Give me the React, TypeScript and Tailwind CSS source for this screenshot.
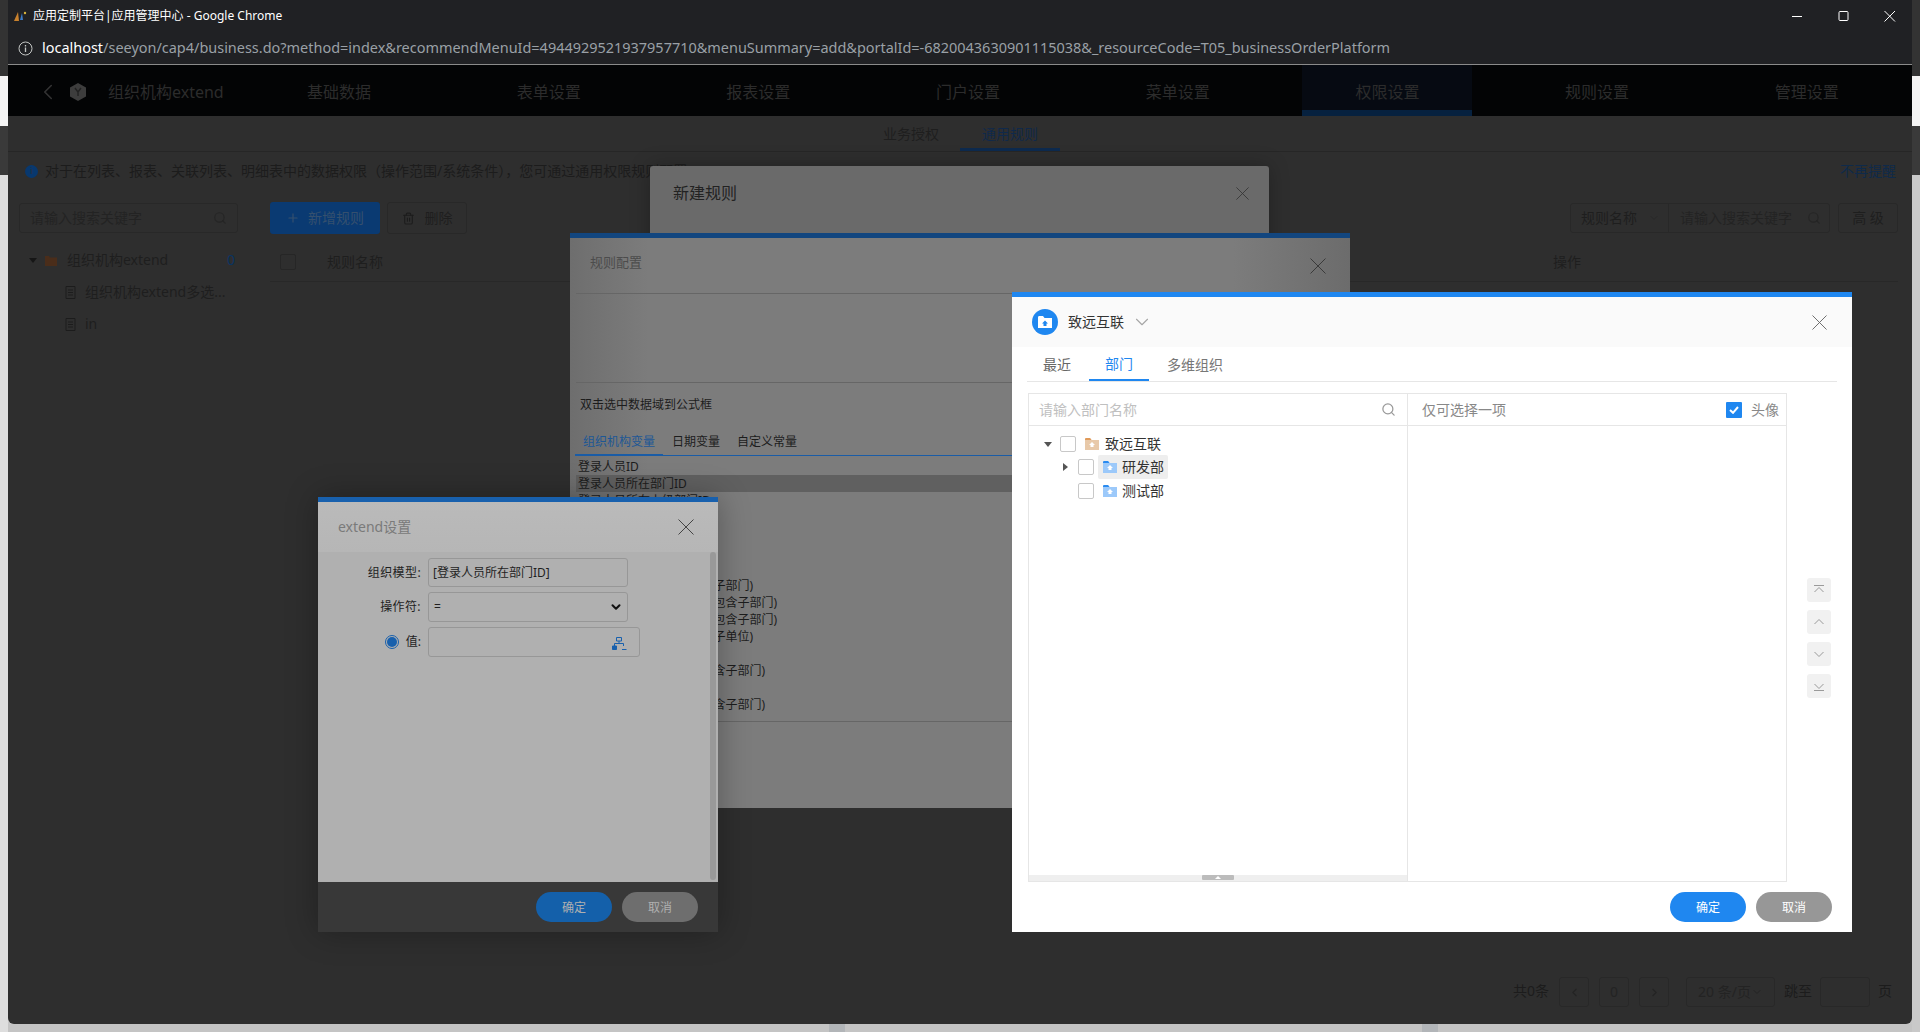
import React from "react";
import { ChevronDown, ChevronLeft, ChevronRight, Plus, Search, Trash2 } from "lucide-react";

const font = "font-['Noto_Sans','Noto_Sans_CJK_SC',sans-serif]";

function Thin({ size = 16, color = "#555" }: { size?: number; color?: string }) {
  return (
    <svg width={size} height={size} viewBox="0 0 16 16">
      <path d="M0.5 0.5L15.5 15.5M15.5 0.5L0.5 15.5" stroke={color} strokeWidth="1" fill="none" />
    </svg>
  );
}

function DocIcon() {
  return (
    <svg width="11" height="13" viewBox="0 0 11 13" fill="none" stroke="#1c1c1c" strokeWidth="1">
      <path d="M1 .5h9v12H1z" />
      <path d="M3 4h5M3 6.500h5M3 9h5" />
    </svg>
  );
}

function FolderIcon({ color, tab, glyph }: { color: string; tab: string; glyph: string }) {
  return (
    <svg width="14" height="12" viewBox="0 0 14 12">
      <path d="M0 1.500C0 .7.500 0 1.300 0H5l1.500 2H14v10H0z" fill={color} />
      <path d="M0 1.500C0 .7.500 0 1.300 0H5l1.500 2H0z" fill={tab} />
      <path d="M7 4l3 3H8.500v2h-3V7H4z" fill={glyph} />
    </svg>
  );
}

function NavItem({ label, active }: { label: string; active?: boolean }) {
  return (
    <div
      className={
        active
          ? "flex h-[51px] items-center justify-center border-b-[6px] border-[#06213f] bg-[#060a12] pt-[8px] text-base text-[#2c2c2c]"
          : "flex h-[51px] items-center justify-center pt-[2px] text-base text-[#2c2c2c]"
      }
    >
      {label}
    </div>
  );
}

const rows = [
  "登录人员ID",
  "登录人员所在部门ID",
  "登录人员所在上级部门ID",
  "登录人员所在单位ID",
  "登录人员所在岗位ID",
  "登录人员职务级别ID",
  "当前日期",
  "登录人员所在部门(不包含子部门)",
  "登录人员所在上级部门(不包含子部门)",
  "登录人员所在单位部门(不包含子部门)",
  "登录人员所在单位(不包含子单位)",
  "登录人员岗位",
  "登录人员所在岗位部门(包含子部门)",
  "登录人员职务",
  "登录人员所在职务部门(包含子部门)",
];

function PageBox({ children, w }: { children?: React.ReactNode; w: string }) {
  return (
    <div className={`flex h-[30px] items-center justify-center rounded-[3px] border border-[#282828] text-[#232323] ${w}`}>
      {children}
    </div>
  );
}

function SideBtn({ d }: { d: string }) {
  return (
    <div className="flex h-6 w-6 items-center justify-center rounded-[3px] bg-[#f1f1f1]">
      <svg width="12" height="12" viewBox="0 0 12 12" fill="none" stroke="#9a9a9a" strokeWidth="1">
        <path d={d} />
      </svg>
    </div>
  );
}

function Box({ className }: { className?: string }) {
  return <span className={`block h-4 w-4 rounded-[2px] border border-[#c8c8c8] bg-white ${className ?? ""}`} />;
}

export default function App() {
  return (
    <div className={`relative flex h-[1032px] w-[1920px] overflow-hidden bg-[#c6c6c6] ${font}`}>
      {/* desktop behind the browser window, left edge */}
      <div className="flex w-2 flex-col">
        <div className="h-[76px] bg-[#333333]" />
        <div className="h-[50px] bg-[#f4f4f4]" />
        <div className="h-[49px] bg-[#3a3a3a]" />
        <div className="flex-1 bg-[#dedede]" />
      </div>

      <div className="flex w-[1904px] flex-col">
        <div className="flex h-[1024px] flex-col overflow-hidden rounded-b-[6px] bg-[#2e2e2e]">
          {/* title bar */}
          <div className="flex h-[32px] shrink-0 items-center bg-[#202124] pl-[5px] text-white">
            <svg width="14" height="12" viewBox="0 0 14 12" className="mr-[6px]">
              <path d="M1 11L5 2l1 9z" fill="#c9812d" />
              <path d="M7 10l2-7 1 7z" fill="#3a7bc8" />
              <circle cx="12" cy="3" r="1.2" fill="#d9b53c" />
            </svg>
            <span className="text-xs">应用定制平台|应用管理中心 - Google Chrome</span>
            <div className="ml-auto flex items-center">
              <svg width="46" height="14" viewBox="0 0 46 14" stroke="#fff" fill="none"><path d="M18 7.500h10" /></svg>
              <svg width="46" height="14" viewBox="0 0 46 14" stroke="#fff" fill="none"><rect x="19" y="2.500" width="9" height="9" rx="1" /></svg>
              <svg width="46" height="14" viewBox="0 0 46 14" stroke="#fff" fill="none"><path d="M18.500 2L29 12.500M29 2L18.500 12.500" /></svg>
            </div>
          </div>
          {/* address bar */}
          <div className="flex h-[33px] shrink-0 items-center border-b border-[#8b8b8b] bg-[#202124] pl-[10px] text-[#9aa0a6]">
            <svg width="15" height="15" viewBox="0 0 15 15" fill="none" stroke="#c4c7c5" className="mr-[9px]">
              <circle cx="7.500" cy="7.500" r="6.500" />
              <path d="M7.500 6.500v4.500M7.500 4v1.400" strokeWidth="1.3" />
            </svg>
            <span className="whitespace-nowrap text-[14.46px]">
              <span className="text-white">localhost</span>
              /seeyon/cap4/business.do?method=index&amp;recommendMenuId=4944929521937957710&amp;menuSummary=add&amp;portalId=-6820043630901115038&amp;_resourceCode=T05_businessOrderPlatform
            </span>
          </div>
          {/* app nav */}
          <div className="flex h-[51px] shrink-0 bg-[#030405]">
            <div className="flex w-[246px] items-center pl-[27px] pt-[2px] text-[#2c2c2c]">
              <ChevronLeft size={26} strokeWidth={1.5} color="#333" />
              <svg width="18" height="20" viewBox="0 0 18 20" className="ml-[8px] mr-[21px] shrink-0">
                <path d="M9 1l8 4.500v9L9 19l-8-4.500v-9z" fill="#3d3d3d" />
                <path d="M6 6l3 4 3-4M9 10v4" stroke="#222" strokeWidth="1.4" fill="none" />
              </svg>
              <span className="whitespace-nowrap text-base">组织机构extend</span>
            </div>
            <div className="grid grid-cols-[repeat(8,170px)] gap-x-[39.7px]">
              {["基础数据", "表单设置", "报表设置", "门户设置", "菜单设置", "权限设置", "规则设置", "管理设置"].map((n) => (
                <NavItem key={n} label={n} active={n === "权限设置"} />
              ))}
            </div>
          </div>
          {/* sub tabs */}
          <div className="flex h-[36px] shrink-0 justify-center border-b border-[#262626] bg-[#2e2e2e] pl-[1px] text-sm">
            <div className="flex w-[100px] items-center justify-center pt-[1px] text-[#1e1e1e]">业务授权</div>
            <div className="ml-[-1px] flex w-[100px] items-center justify-center border-b-[3px] border-[#0d2a4e] pt-[4px] text-[#10294a]">通用规则</div>
          </div>
          {/* notice */}
          <div className="flex h-[38px] shrink-0 items-center bg-[#2e2e2e] pl-[17px] pr-[16px] text-sm text-[#1c1c1c]">
            <span className="mr-[7px] flex h-[13px] w-[13px] items-center justify-center rounded-full bg-[#08386e] text-[9px] text-[#2e2e2e]">i</span>
            <span className="whitespace-nowrap">对于在列表、报表、关联列表、明细表中的数据权限（操作范围/系统条件），您可通过通用权限规则配置</span>
            <span className="ml-auto text-[#0f2a4a]">不再提醒</span>
          </div>
          {/* content */}
          <div className="flex min-h-0 flex-1 text-sm text-[#1e1e1e]">
            <div className="w-[247px] shrink-0 pl-[11px] pt-[13px]">
              <div className="flex h-[30px] w-[219px] items-center justify-between rounded-[3px] border border-[#282828] px-[10px] text-[#232323]">
                <span>请输入搜索关键字</span>
                <Search size={14} color="#252525" />
              </div>
              <div className="mt-[11px] flex h-[32px] items-center pl-[10px] pr-[20px]">
                <span className="mr-[8px] h-0 w-0 border-x-[4px] border-t-[5px] border-x-transparent border-t-[#161616]" />
                <svg width="12" height="11" viewBox="0 0 12 11"><path d="M0 1h4l1 1.500h7V11H0z" fill="#4a2d1a" /></svg>
                <span className="ml-[10px]">组织机构extend</span>
                <span className="ml-auto text-[#0a3462]">0</span>
              </div>
              <div className="flex h-[32px] items-center pl-[46px]">
                <DocIcon />
                <span className="ml-[9px] whitespace-nowrap">组织机构extend多选...</span>
              </div>
              <div className="flex h-[32px] items-center pl-[46px]">
                <DocIcon />
                <span className="ml-[9px]">in</span>
              </div>
            </div>
            <div className="flex min-w-0 flex-1 flex-col pl-[15px] pr-[14px]">
              <div className="mt-[12px] flex h-[32px] shrink-0 items-center">
                <div className="flex h-[32px] w-[110px] items-center justify-center gap-[8px] rounded-[3px] bg-[#0a3a72] text-[#35506e]">
                  <Plus size={14} color="#35506e" />
                  <span>新增规则</span>
                </div>
                <div className="ml-[7px] flex h-[32px] w-[80px] items-center justify-center gap-[10px] rounded-[3px] border border-[#282828]">
                  <Trash2 size={13} color="#1c1c1c" />
                  <span>删除</span>
                </div>
                <div className="ml-auto flex h-[30px] w-[260px] rounded-[3px] border border-[#282828] text-[#232323]">
                  <div className="flex w-[98px] items-center justify-between border-r border-[#282828] pl-[10px] pr-[8px] text-[#1e1e1e]">
                    规则名称 <ChevronDown size={12} color="#282828" />
                  </div>
                  <div className="flex flex-1 items-center justify-between pl-[11px] pr-[8px] whitespace-nowrap">
                    请输入搜索关键字 <Search size={14} color="#252525" />
                  </div>
                </div>
                <div className="ml-[8px] flex h-[30px] w-[60px] items-center justify-center rounded-[3px] border border-[#282828]">高 级</div>
              </div>
              <div className="mt-[11px] flex h-[37px] shrink-0 items-center border-b border-[#282828] pb-[2px] pl-[10px]">
                <span className="h-4 w-4 rounded-[2px] border border-[#262626]" />
                <span className="ml-[31px]">规则名称</span>
                <span className="ml-[1170px]">操作</span>
              </div>
              <div className="flex flex-1 items-end justify-end pb-[17px] pr-[6px]">
                <div className="flex items-center text-[#1c1c1c]">
                  <span className="mr-[10px] pb-[2px]">共0条</span>
                  <PageBox w="w-[30px]"><ChevronLeft size={13} /></PageBox>
                  <span className="w-[10px]" />
                  <PageBox w="w-[30px]">0</PageBox>
                  <span className="w-[10px]" />
                  <PageBox w="w-[30px]"><ChevronRight size={13} /></PageBox>
                  <span className="w-[17px]" />
                  <PageBox w="w-[89px]">20 条/页<ChevronDown size={12} /></PageBox>
                  <span className="ml-[9px] pb-[2px]">跳至</span>
                  <span className="w-[8px]" />
                  <PageBox w="w-[50px]" />
                  <span className="ml-[8px] pb-[2px]">页</span>
                </div>
              </div>
            </div>
          </div>
        </div>
        {/* desktop below the browser window */}
        <div className="relative flex-1 bg-[#c4c4c4]">
          <span className="absolute left-[821px] top-0 h-2 w-4 bg-[#b2b5b8]" />
          <span className="absolute left-[1414px] top-0 h-2 w-4 bg-[#b2b5b8]" />
        </div>
      </div>

      {/* desktop behind the browser window, right edge */}
      <div className="flex w-2 flex-col">
        <div className="h-[76px] bg-[#333333]" />
        <div className="h-[50px] bg-[#f4f4f4]" />
        <div className="h-[49px] bg-[#3a3a3a]" />
        <div className="flex-1 bg-[#c9c9c9]" />
      </div>

      {/* 新建规则 */}
      <div className="absolute left-[650px] top-[166px] flex h-[120px] w-[619px] items-start justify-between rounded-t-[3px] bg-[#6a6a6a] px-[23px] pt-[15px] shadow-[0_0_20px_rgba(0,0,0,0.25)]">
        <span className="text-base text-[#222]">新建规则</span>
        <span className="mr-[-3px] mt-[6px]"><Thin size={13} color="#333" /></span>
      </div>

      {/* 规则配置 */}
      <div className="absolute left-[570px] top-[233px] flex h-[575px] w-[780px] flex-col border-t-[5px] border-[#12467f] bg-[linear-gradient(90deg,#6e6e6e_0%,#7c7c7c_10%,#7c7c7c_85%,#6c6c6c_100%)] text-xs text-[#1c1c1c]">
        <div className="flex h-[55px] shrink-0 items-center justify-between pl-[20px] pr-[24px]">
          <span className="mt-[-6px] text-[13px] text-[#4c4c4c]">规则配置</span>
          <Thin size={16} color="#3a3a3a" />
        </div>
        <div className="ml-[6px] h-[90px] shrink-0 border-y border-[#666]" />
        <div className="ml-[10px] mt-[13px] h-[17px] leading-[17px]">双击选中数据域到公式框</div>
        <div className="ml-[5px] mt-[20px] flex h-[23px] shrink-0 items-start border-b border-[#1a5ca6] pt-[1px]">
          <div className="flex h-[22px] w-[88px] justify-center border-b-[2px] border-[#1a5ca6] text-[#1d5795]">组织机构变量</div>
          <div className="ml-[9px] text-[#1c1c1c]">日期变量</div>
          <div className="ml-[17px] text-[#1c1c1c]">自定义常量</div>
        </div>
        <div className="ml-[6px] mt-[2px] h-[263px] shrink-0">
          {rows.map((r, i) => (
            <div key={i} className={i === 1 ? "h-[17px] bg-[#606060] pl-[2px] leading-[17px]" : "h-[17px] pl-[2px] leading-[17px]"}>
              {r}
            </div>
          ))}
        </div>
        <div className="h-px bg-[#666]" />
      </div>

      {/* extend设置 */}
      <div className="absolute left-[318px] top-[497px] flex h-[435px] w-[400px] flex-col border-t-[5px] border-[#1860ad] bg-[#b0b0b0] text-xs text-[#1f1f1f] shadow-[0_0_30px_rgba(0,0,0,0.3)]">
        <div className="flex h-[50px] shrink-0 items-center justify-between bg-[linear-gradient(180deg,#bababa,#b6b6b6)] pl-[20px] pr-[24px]">
          <span className="text-sm text-[#7a7a7a]">extend设置</span>
          <Thin size={16} color="#444" />
        </div>
        <div className="relative min-h-0 flex-1 pt-[6px]">
          <div className="flex h-[29px] items-center">
            <span className="w-[103px] text-right tracking-[0.4px]">组织模型:</span>
            <div className="ml-[7px] flex h-[29px] w-[200px] items-center rounded-[3px] border border-[#979797] pl-[4px]">[登录人员所在部门ID]</div>
          </div>
          <div className="mt-[5px] flex h-[30px] items-center">
            <span className="w-[103px] text-right tracking-[0.4px]">操作符:</span>
            <div className="ml-[7px] flex h-[30px] w-[200px] items-center justify-between rounded-[3px] border border-[#979797] pl-[5px] pr-[4px]">
              <span>=</span>
              <ChevronDown size={14} strokeWidth={3.5} color="#111" />
            </div>
          </div>
          <div className="mt-[5px] flex h-[30px] items-center">
            <span className="ml-[67px] flex h-[14px] w-[14px] items-center justify-center rounded-full border border-[#1860ad]">
              <span className="h-[10px] w-[10px] rounded-full bg-[#1860ad]" />
            </span>
            <span className="ml-[3px] w-[19px] whitespace-nowrap text-right">值:</span>
            <div className="ml-[7px] flex h-[30px] w-[212px] items-center justify-end rounded-[3px] border border-[#979797] pr-[12px]">
              <svg width="15" height="13" viewBox="0 0 15 13" fill="none" stroke="#1860ad" className="mt-[3px]">
                <path d="M4.500.500h5V4h-5z" />
                <path d="M7 4v2.500M2.500 9V6.500h9V9" />
                <path d="M.500 9h4v3.500h-4z" fill="#1860ad" />
                <path d="M10 12.500h4.500" />
              </svg>
            </div>
          </div>
          <span className="absolute bottom-[2px] right-[2px] top-0 w-[6px] rounded-full bg-[#999]" />
        </div>
        <div className="flex h-[50px] shrink-0 items-center justify-end gap-[10px] bg-[#383838] pr-[20px] text-[#b0b0b0]">
          <div className="flex h-[30px] w-[76px] items-center justify-center rounded-full bg-[#1460aa] pt-[1px]">确定</div>
          <div className="flex h-[30px] w-[76px] items-center justify-center rounded-full bg-[#6e6e6e] pt-[1px]">取消</div>
        </div>
      </div>

      {/* department picker */}
      <div className="absolute left-[1012px] top-[292px] flex h-[640px] w-[840px] flex-col border-t-[5px] border-[#1f87f0] bg-white text-sm">
        <div className="flex h-[50px] shrink-0 items-center bg-[#fafafa] pl-[20px] pr-[25px] text-[#333]">
          <span className="flex h-[26px] w-[26px] items-center justify-center rounded-full bg-[#1f87f0]">
            <svg width="14" height="12" viewBox="0 0 14 12">
              <path d="M0 1.500C0 .7.500 0 1.300 0H5l1.500 2H14v10H0z" fill="#fff" />
              <path d="M7 4.500L4 7.500H5.500v2.500h3V7.500H10z" fill="#1f87f0" />
            </svg>
          </span>
          <span className="ml-[10px]">致远互联</span>
          <ChevronDown size={22} strokeWidth={1.2} color="#a6a6a6" className="ml-[7px]" />
          <span className="ml-auto"><Thin size={15} color="#666" /></span>
        </div>
        <div className="mx-[15px] flex h-[35px] shrink-0 items-end border-b border-[#e6e6e6]">
          <div className="flex h-[35px] w-[62px] items-center justify-center pr-[2px] pt-[2px] text-[#666]">最近</div>
          <div className="flex h-[35px] w-[60px] items-center justify-center border-b-2 border-[#1f87f0] pt-[2px] text-[#1f87f0]">部门</div>
          <div className="ml-[18px] flex h-[35px] items-center pt-[2px] text-[#777]">多维组织</div>
        </div>
        <div className="ml-[16px] mt-[11px] flex h-[489px] shrink-0 items-stretch">
          <div className="flex w-[759px] border border-[#e6e6e6]">
            <div className="relative flex w-[379px] flex-col border-r border-[#e6e6e6]">
              <div className="flex h-[32px] shrink-0 items-center justify-between border-b border-[#e6e6e6] pl-[10px] pr-[11px] text-[#c0c0c0]">
                <span>请输入部门名称</span>
                <Search size={15} color="#999" />
              </div>
              <div className="pl-[15px] pt-[7px] text-[#333]">
                <div className="flex h-[22px] items-center">
                  <span className="h-0 w-0 border-x-[4px] border-t-[5px] border-x-transparent border-t-[#555]" />
                  <Box className="ml-[8px] bg-[#f3f3f3]" />
                  <span className="ml-[9px]"><FolderIcon color="#e8c9a9" tab="#e09a5a" glyph="#fff" /></span>
                  <span className="ml-[6px]">致远互联</span>
                </div>
                <div className="flex h-[24px] items-center pl-[19px]">
                  <span className="h-0 w-0 border-y-[4px] border-l-[5px] border-y-transparent border-l-[#555]" />
                  <Box className="ml-[10px]" />
                  <span className="ml-[4px] flex h-[24px] w-[70px] items-center rounded-[2px] bg-[#eeeeee] pl-[5px]">
                    <FolderIcon color="#9cc9fa" tab="#2a8bf0" glyph="#fff" />
                    <span className="ml-[5px]">研发部</span>
                  </span>
                </div>
                <div className="flex h-[24px] items-center pl-[34px]">
                  <Box />
                  <span className="ml-[9px]"><FolderIcon color="#9cc9fa" tab="#2a8bf0" glyph="#fff" /></span>
                  <span className="ml-[5px]">测试部</span>
                </div>
              </div>
              <div className="absolute inset-x-0 bottom-0 flex h-[6px] justify-center bg-[#efefef]">
                <span className="flex h-[5px] w-[32px] items-center justify-center rounded-[1px] bg-[#bcbcbc]">
                  <span className="h-0 w-0 border-x-[3px] border-b-[3px] border-x-transparent border-b-white" />
                </span>
              </div>
            </div>
            <div className="flex-1">
              <div className="flex h-[32px] items-center border-b border-[#e6e6e6] pl-[14px] pr-[7px] text-[#888]">
                <span>仅可选择一项</span>
                <span className="ml-auto flex h-4 w-4 items-center justify-center rounded-[1px] bg-[#1f87f0]">
                  <svg width="10" height="8" viewBox="0 0 10 8" fill="none" stroke="#fff" strokeWidth="2"><path d="M1 4l3 2.800L9 1" /></svg>
                </span>
                <span className="ml-[9px]">头像</span>
              </div>
            </div>
          </div>
          <div className="ml-[20px] flex flex-col gap-2 pt-[185px]">
            <SideBtn d="M1 1.500h10M1.500 8L6 3.500 10.500 8" />
            <SideBtn d="M1.500 8L6 3.500 10.500 8" />
            <SideBtn d="M1.500 4L6 8.500 10.500 4" />
            <SideBtn d="M1 10.500h10M1.500 4L6 8.500 10.500 4" />
          </div>
        </div>
        <div className="flex flex-1 items-start justify-end gap-[10px] pr-[20px] pt-[10px] text-xs text-white">
          <div className="flex h-[30px] w-[76px] items-center justify-center rounded-full bg-[#1f87f0] pt-[1px]">确定</div>
          <div className="flex h-[30px] w-[76px] items-center justify-center rounded-full bg-[#979797] pt-[1px]">取消</div>
        </div>
      </div>
    </div>
  );
}
